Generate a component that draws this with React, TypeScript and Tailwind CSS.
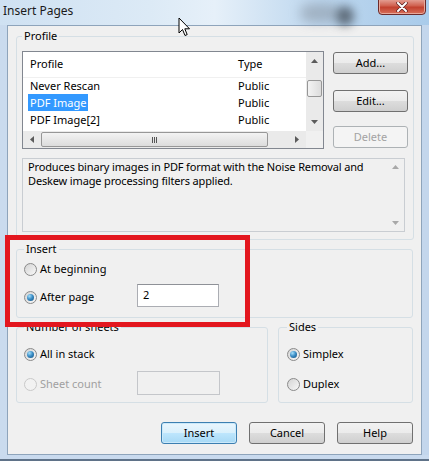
import React from "react";

const Up = ({ c = "#5b5b5b" }: { c?: string }) => (
  <svg width="7" height="4" viewBox="0 0 7 4"><path d="M0 4 L3.5 0 L7 4 Z" fill={c} /></svg>
);
const Down = ({ c = "#5b5b5b" }: { c?: string }) => (
  <svg width="7" height="4" viewBox="0 0 7 4"><path d="M0 0 L3.5 4 L7 0 Z" fill={c} /></svg>
);
const Left = () => (
  <svg width="4" height="7" viewBox="0 0 4 7"><path d="M4 0 L0 3.5 L4 7 Z" fill="#5b5b5b" /></svg>
);
const Right = () => (
  <svg width="4" height="7" viewBox="0 0 4 7"><path d="M0 0 L4 3.5 L0 7 Z" fill="#5b5b5b" /></svg>
);

function Radio({ checked = false, disabled = false }: { checked?: boolean; disabled?: boolean }) {
  return (
    <div
      className={
        "w-[13px] h-[13px] rounded-full border flex items-center justify-center shrink-0 " +
        (disabled
          ? "border-[#c9c9c9] bg-[#f2f2f2]"
          : "border-[#8a8a8a] bg-[linear-gradient(135deg,#d4d4d4,#f8f8f8)]")
      }
    >
      {checked && (
        <div className="w-[7px] h-[7px] rounded-full bg-[radial-gradient(circle_at_35%_30%,#a6e0fb_0%,#3d8fc7_45%,#0f4d7c_100%)]" />
      )}
    </div>
  );
}

function Btn({ label, def = false, disabled = false }: { label: string; def?: boolean; disabled?: boolean }) {
  return (
    <div
      className={
        "h-[22px] rounded-[3px] border flex items-center justify-center " +
        (disabled
          ? "border-[#adb2b5] bg-[#f4f4f4] text-[#a3a3a3]"
          : def
          ? "border-[#3c7fb1] bg-[linear-gradient(#eaf6fd_0%,#d9f0fc_50%,#bee6fd_50%,#a7d9f5_100%)] shadow-[inset_0_0_0_1px_#cbe9fa] text-black"
          : "border-[#707070] bg-[linear-gradient(#f2f2f2_0%,#ebebeb_50%,#dddddd_50%,#cfcfcf_100%)] text-black")
      }
    >
      {label}
    </div>
  );
}

function Legend({ children }: { children: React.ReactNode }) {
  return <legend className="px-[2px] leading-[14px] text-black">{children}</legend>;
}

export default function App() {
  return (
    <div className="w-[429px] h-[461px] relative overflow-hidden bg-[linear-gradient(90deg,#cadbee,#c3d6ec)] font-['Noto_Sans',sans-serif] text-[11px] text-black">
      {/* title bar */}
      <div className="h-[25px] relative flex justify-between bg-[linear-gradient(90deg,#cfe1f2_0%,#dceaf6_35%,#e6f0f9_50%,#bcd6ee_75%,#a9cbea_100%)]">
        <div className="absolute left-[300px] top-[4px] w-[40px] h-[18px] rounded-full bg-[#8c98a5] opacity-60 blur-[6px]" />
        <div className="absolute left-[336px] top-[6px] w-[18px] h-[20px] rounded-full bg-[#3d4650] opacity-70 blur-[5px]" />
        <div className="relative pl-[3px] pt-[3px] text-[12px] text-[#1a1a1a] leading-[16px]">Insert Pages</div>
        <div className="relative mr-[3px] mt-[-2px] w-[48px] h-[17px] rounded-b-[4px] border border-[#6d2a2a] bg-[linear-gradient(#e6a79c_0%,#d0614f_45%,#c2412f_55%,#d8705a_100%)] flex items-center justify-center shadow-[inset_0_0_0_1px_#e8a89a]">
          <svg width="12" height="10" viewBox="0 0 12 10">
            <path d="M2 1 L10 9 M10 1 L2 9" stroke="#5a2020" strokeWidth="3.4" strokeLinecap="round" />
            <path d="M2 1 L10 9 M10 1 L2 9" stroke="#ffffff" strokeWidth="2" strokeLinecap="round" />
          </svg>
        </div>
      </div>

      {/* client area */}
      <div className="mx-[7px] h-[430px] border border-[#8ea4bb] bg-[#f0f0f0] px-[8px] pt-[3px] flex flex-col">
        {/* Profile */}
        <fieldset className="border border-[#d5dfe5] rounded-[3px] px-[5px] pb-[7px]">
          <Legend>Profile</Legend>
          <div className="pt-[8px] flex gap-[9px]">
            {/* listview */}
            <div className="w-[302px] h-[98px] border border-[#828790] bg-white flex flex-col">
              <div className="flex h-[79px]">
                <div className="flex-1 flex flex-col">
                  <div className="h-[26px] flex items-center border-b border-[#f0f0f0]">
                    <div className="w-[213px] pl-[7px]">Profile</div>
                    <div className="pl-[2px]">Type</div>
                  </div>
                  {[
                    ["Never Rescan", false],
                    ["PDF Image", true],
                    ["PDF Image[2]", false],
                  ].map(([n, sel]) => (
                    <div key={n as string} className="h-[17px] flex items-center">
                      <div className="w-[213px] pl-[5px]">
                        <span className={"px-[2px] py-[1px] " + (sel ? "bg-[#3399ff] text-white" : "")}>{n as string}</span>
                      </div>
                      <div className="pl-[2px]">Public</div>
                    </div>
                  ))}
                </div>
                {/* vscroll */}
                <div className="w-[17px] bg-[#eaeaea] flex flex-col items-center">
                  <div className="h-[18px] flex items-center justify-center"><Up /></div>
                  <div className="mt-[10px] w-[15px] h-[17px] rounded-[2px] border border-[#979797] bg-[linear-gradient(90deg,#f3f3f3,#dcdcdc)]" />
                  <div className="flex-1" />
                  <div className="h-[18px] flex items-center justify-center"><Down /></div>
                </div>
              </div>
              {/* hscroll */}
              <div className="h-[17px] flex">
                <div className="flex-1 bg-[#eaeaea] flex items-center">
                  <div className="w-[18px] flex justify-center"><Left /></div>
                  <div className="w-[227px] h-[15px] rounded-[2px] border border-[#979797] bg-[linear-gradient(#f3f3f3,#dcdcdc)] flex items-center justify-center gap-[1px]">
                    <div className="w-[1px] h-[6px] bg-[#555]" />
                    <div className="w-[1px] h-[6px] bg-[#555]" />
                    <div className="w-[1px] h-[6px] bg-[#555]" />
                  </div>
                  <div className="flex-1 flex justify-end pr-[7px]"><Right /></div>
                </div>
                <div className="w-[17px] bg-[#f0f0f0]" />
              </div>
            </div>
            {/* buttons */}
            <div className="w-[75px] flex flex-col pt-[1px]">
              <Btn label="Add..." />
              <div className="mt-[16px]"><Btn label="Edit..." /></div>
              <div className="mt-[14px]"><Btn label="Delete" disabled /></div>
            </div>
          </div>
          {/* description */}
          <div className="mt-[9px] w-[383px] h-[74px] border border-[#c9cdd2] bg-[#f0f0f0] flex">
            <div className="flex-1 pl-[5px] pt-[1px] leading-[14px] tracking-[-0.15px]">
              <div>Produces binary images in PDF format with the Noise Removal and</div>
              <div>Deskew image processing filters applied.</div>
            </div>
            <div className="w-[17px] flex flex-col items-center justify-between py-[6px]">
              <Up c="#a8a8a8" />
              <Down c="#a8a8a8" />
            </div>
          </div>
        </fieldset>

        {/* Insert */}
        <fieldset className="mt-[2px] border border-[#d5dfe5] rounded-[3px] px-[7px] pb-[10px]">
          <Legend>Insert</Legend>
          <div className="mt-[4px] h-[18px] flex items-center gap-[3px]">
            <Radio />
            <span>At beginning</span>
          </div>
          <div className="mt-[6px] h-[23px] flex items-center">
            <div className="w-[113px] flex items-center gap-[3px] pt-[3px]">
              <Radio checked />
              <span>After page</span>
            </div>
            <div className="w-[82px] h-[23px] border border-[#abadb3] border-t-[#8e9197] bg-white pl-[5px] flex items-center">2</div>
          </div>
        </fieldset>

        {/* Number of sheets + Sides */}
        <div className="mt-[2px] flex gap-[10px]">
          <fieldset className="w-[252px] border border-[#d5dfe5] rounded-[3px] px-[7px] pb-[8px]">
            <Legend>Number of sheets</Legend>
            <div className="mt-[11px] h-[18px] flex items-center gap-[3px]">
              <Radio checked />
              <span>All in stack</span>
            </div>
            <div className="mt-[8px] h-[23px] flex items-center">
              <div className="w-[113px] flex items-center gap-[3px] pt-[3px]">
                <Radio disabled />
                <span className="text-[#a0a0a0]">Sheet count</span>
              </div>
              <div className="w-[83px] h-[24px] border border-[#c4c6ca] bg-[#f0f0f0]" />
            </div>
          </fieldset>
          <fieldset className="flex-1 border border-[#d5dfe5] rounded-[3px] px-[8px] pb-[8px]">
            <Legend>Sides</Legend>
            <div className="mt-[11px] h-[18px] flex items-center gap-[3px]">
              <Radio checked />
              <span>Simplex</span>
            </div>
            <div className="mt-[8px] h-[23px] flex items-center gap-[3px] pt-[3px]">
              <Radio />
              <span>Duplex</span>
            </div>
          </fieldset>
        </div>

        {/* buttons */}
        <div className="mt-[19px] flex justify-end gap-[12px]">
          <div className="w-[76px]"><Btn label="Insert" def /></div>
          <div className="w-[76px]"><Btn label="Cancel" /></div>
          <div className="w-[76px]"><Btn label="Help" /></div>
        </div>
      </div>
      {/* bottom frame */}
      <div className="h-[6px] mx-0 border-b-[2px] border-[#5f7288] bg-[#c9daee]" />

      {/* red highlight */}
      <div className="absolute left-[5px] top-[235px] w-[245px] h-[92px] border-[5px] border-[#e3171f]" />

      {/* cursor */}
      <svg className="absolute left-[178px] top-[17px]" width="13" height="21" viewBox="0 0 13 21">
        <path d="M1 1 L1 16 L4.5 12.5 L7 18.5 L9.2 17.6 L6.8 11.8 L11.5 11.8 Z" fill="#fff" stroke="#000" strokeWidth="1" strokeLinejoin="round" />
      </svg>
    </div>
  );
}
